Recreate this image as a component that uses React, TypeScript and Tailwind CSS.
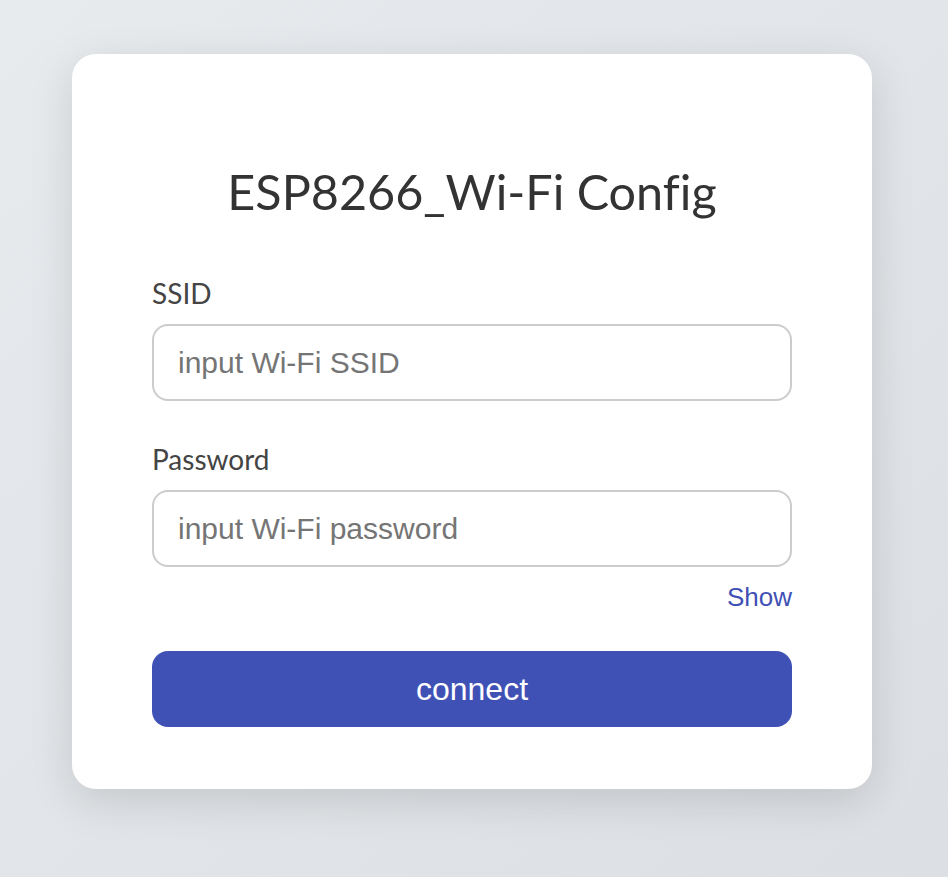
import React from "react";

export default function App() {
  return (
    <div className="min-h-[877px] w-full bg-gradient-to-br from-[#e8ebee] to-[#dcdfe3] pt-[54px] pb-[89px]">
      <div className="ml-[72px] w-[800px] rounded-[24px] bg-white px-[80px] pt-[106px] pb-[62px] shadow-[0_12px_44px_rgba(0,0,0,0.13)]">
        <h1 className="text-center text-[48.5px] leading-[62px] text-[#333] font-['Lato','Noto_Sans',sans-serif] font-normal [font-variant-ligatures:none]">
          ESP8266_Wi-Fi Config
        </h1>
        <div className="mt-[54px]">
          <label className="block text-[28px] leading-[34px] text-[#444] font-['Lato','Noto_Sans',sans-serif]">SSID</label>
          <input
            className="mt-[14px] block h-[77px] w-full rounded-[16px] border-2 border-[#cccccc] bg-white px-[24px] text-[30px] text-[#333] outline-none placeholder:text-[#757575] font-['Liberation_Sans',Arial,sans-serif]"
            placeholder="input Wi-Fi SSID"
          />
        </div>
        <div className="mt-[41px]">
          <label className="block text-[28px] leading-[34px] text-[#444] font-['Lato','Noto_Sans',sans-serif]">Password</label>
          <input
            type="password"
            className="mt-[14px] block h-[77px] w-full rounded-[16px] border-2 border-[#cccccc] bg-white px-[24px] text-[30px] text-[#333] outline-none placeholder:text-[#757575] font-['Liberation_Sans',Arial,sans-serif]"
            placeholder="input Wi-Fi password"
          />
          <div className="mt-[15px] flex justify-end">
            <span className="text-[26px] leading-[30px] text-[#3f51b5] font-['Liberation_Sans',Arial,sans-serif]">Show</span>
          </div>
        </div>
        <button className="mt-[39px] block h-[76px] w-full rounded-[16px] bg-[#3f51b5] text-[32px] text-white font-['Liberation_Sans',Arial,sans-serif]">
          connect
        </button>
      </div>
    </div>
  );
}
